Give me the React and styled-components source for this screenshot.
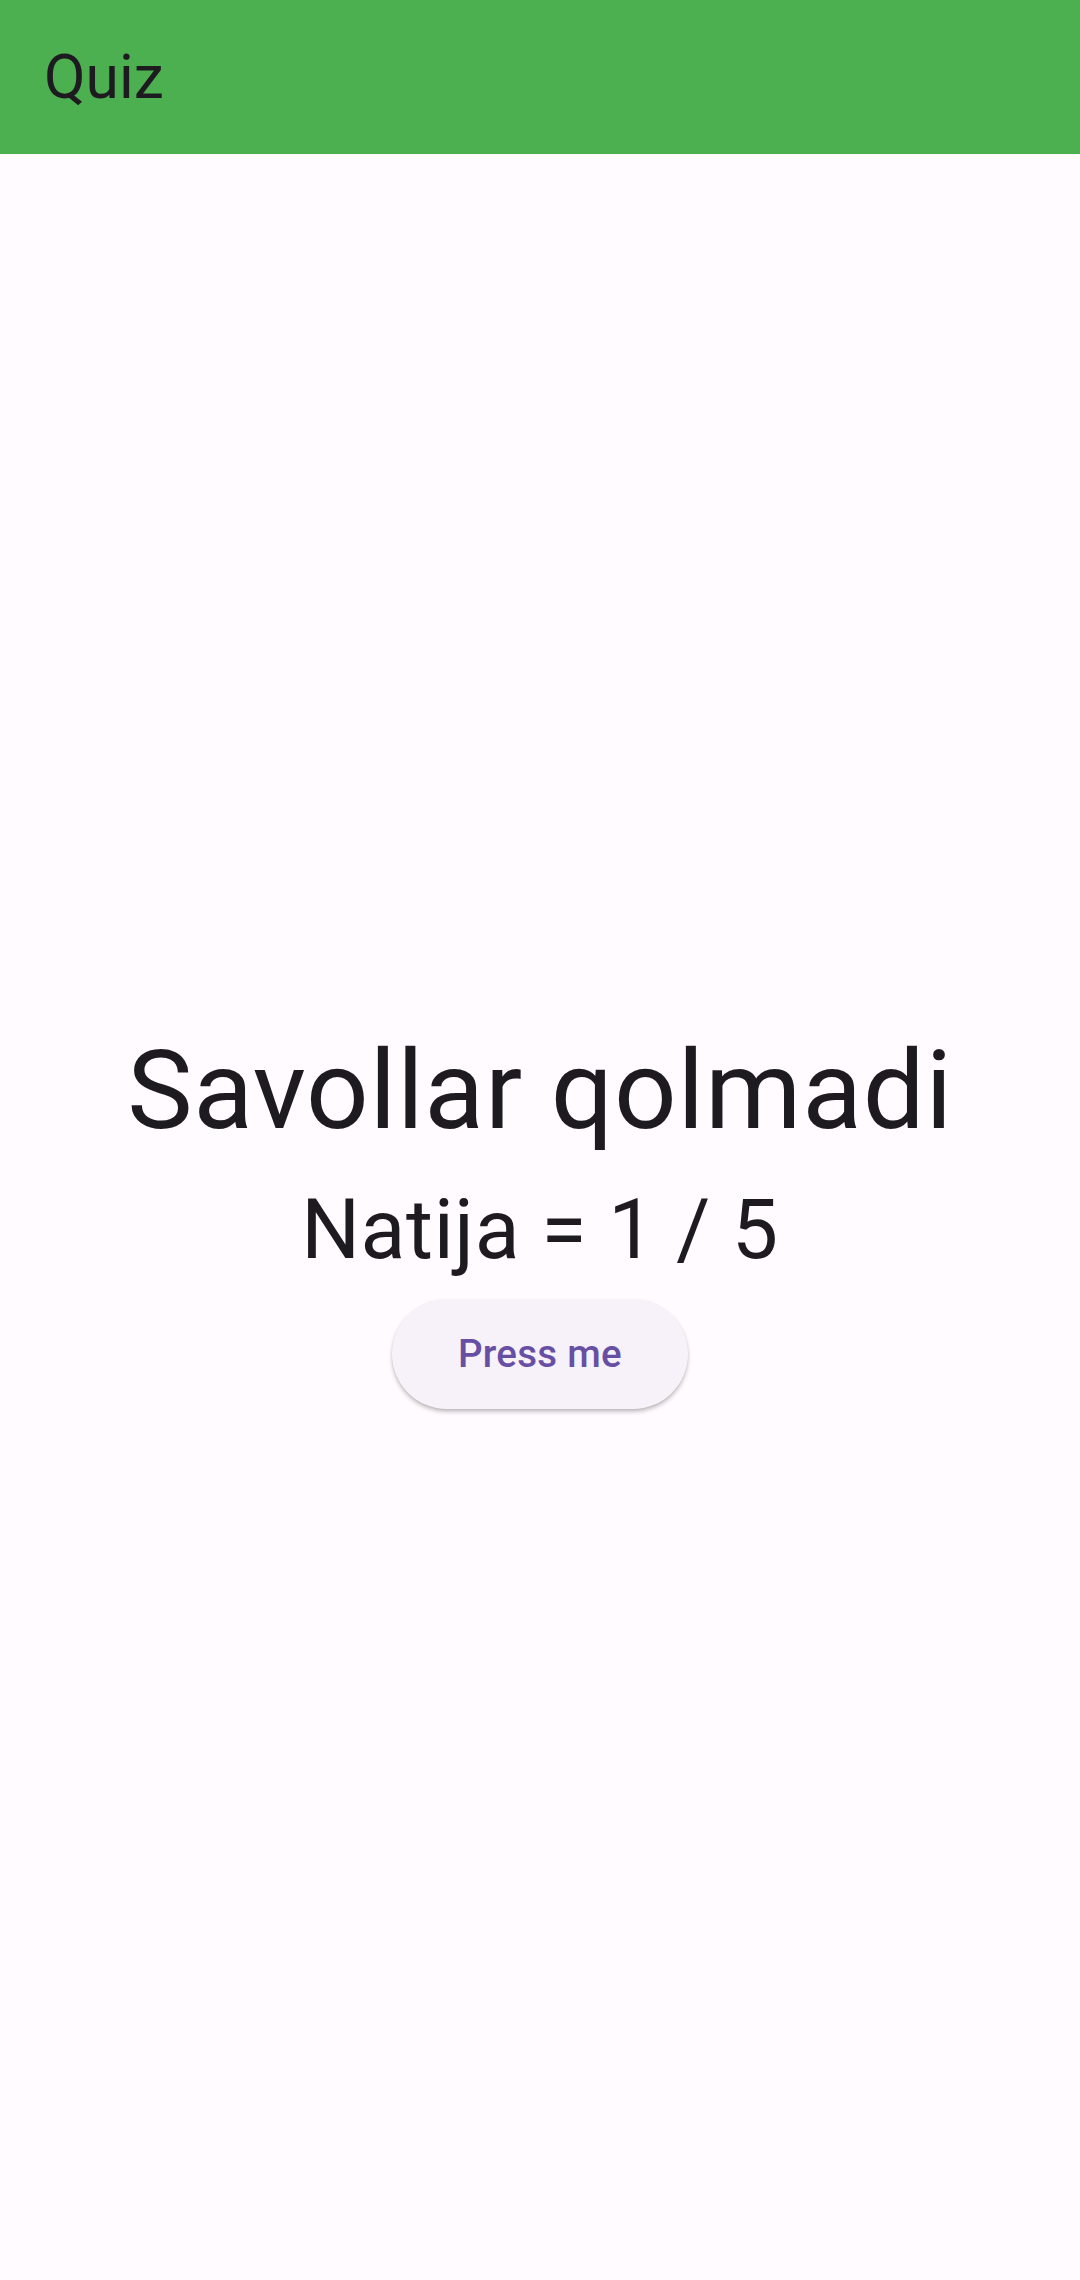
import React from "react"
import styled, { createGlobalStyle } from "styled-components"

const GlobalStyle = createGlobalStyle`
  html,
  body {
    margin: 0;
    padding: 0;
    background: #fffbfe;
  }

  body {
    font-family: Roboto, "Noto Sans", "Liberation Sans", sans-serif;
    color: #1d1b20;
  }
`

const App = () => (
  <Screen>
    <GlobalStyle />
    <AppBar>
      <Title>Quiz</Title>
    </AppBar>
    <Body>
      <Result>
        <Heading>Savollar qolmadi</Heading>
        <Score>Natija = 1 / 5</Score>
        <Button type="button">Press me</Button>
      </Result>
    </Body>
  </Screen>
)

const Screen = styled.div`
  width: 1080px;
  height: 2280px;
  display: flex;
  flex-direction: column;
  background: #fffbfe;
  overflow: hidden;
`

const AppBar = styled.header`
  height: 154px;
  flex-shrink: 0;
  display: flex;
  align-items: center;
  padding: 0 44px;
  background: #4caf50;
`

const Title = styled.h1`
  margin: 0;
  font-size: 60.5px;
  font-weight: 400;
  line-height: 77px;
  color: #1d1b20;
`

const Body = styled.main`
  flex: 1;
  display: flex;
  align-items: center;
  justify-content: center;
`

const Result = styled.div`
  display: flex;
  flex-direction: column;
  align-items: center;
`

const Heading = styled.h2`
  margin: 0;
  font-size: 110px;
  font-weight: 400;
  line-height: 129px;
  letter-spacing: 0.7px;
  color: #1d1b20;
`

const Score = styled.p`
  margin: 26px 0 0;
  font-size: 82.5px;
  font-weight: 400;
  line-height: 97px;
  letter-spacing: 0.6px;
  color: #1d1b20;
`

const Button = styled.button`
  margin-top: 21px;
  height: 110px;
  padding: 0 66px;
  border: none;
  border-radius: 55px;
  background: #f7f2fa;
  color: #6750a4;
  font-family: Roboto, "Noto Sans", "Liberation Sans", sans-serif;
  font-size: 38.5px;
  font-weight: 500;
  letter-spacing: 0.275px;
  box-shadow: 0 3px 4px rgba(0, 0, 0, 0.22), 0 1px 2px rgba(0, 0, 0, 0.08);
  cursor: pointer;
`

export default App
